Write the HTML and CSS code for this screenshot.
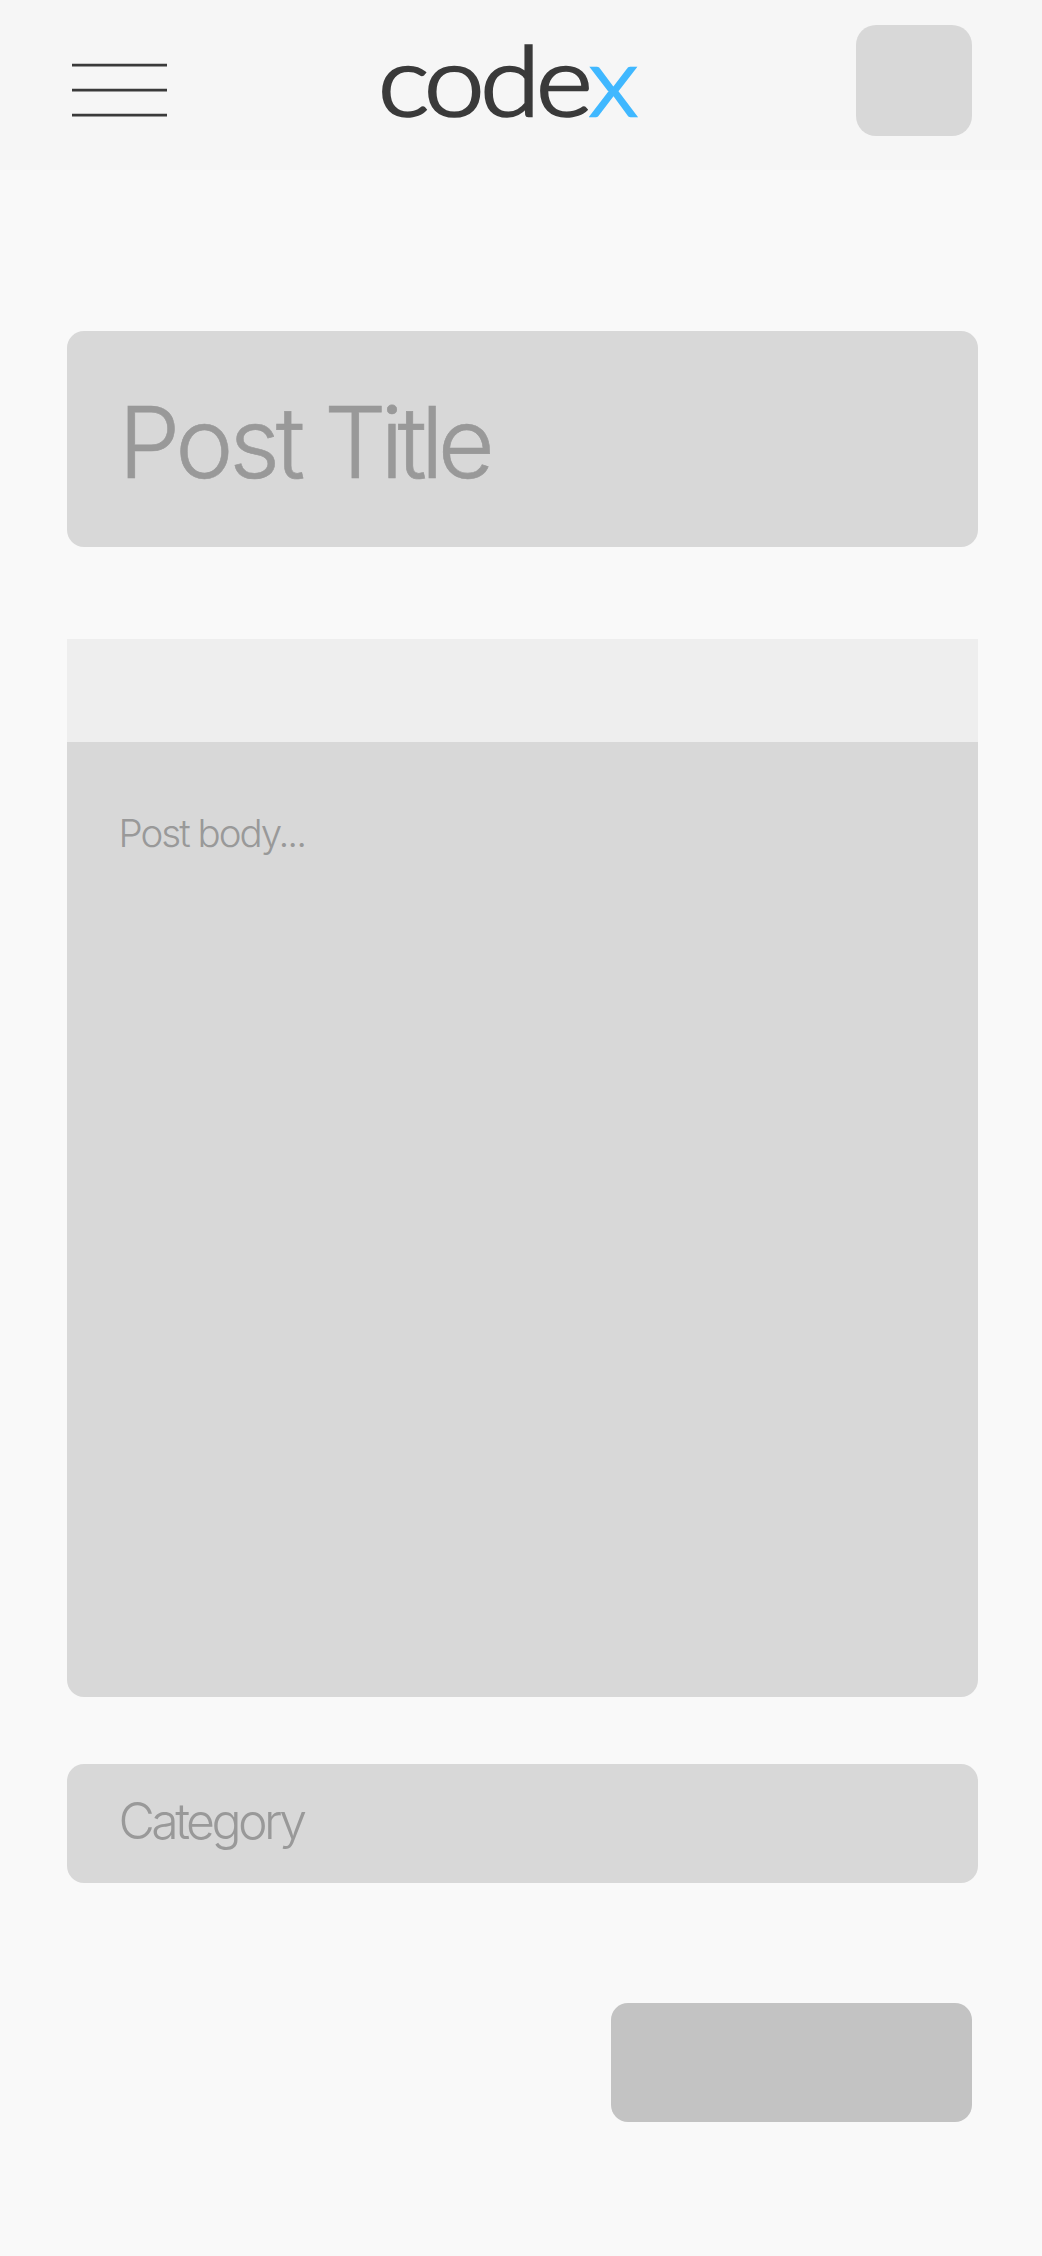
FILE: index.html
```html
<!DOCTYPE html>
<html lang="en">
<head>
<meta charset="utf-8">
<title>codex</title>
<link rel="stylesheet" href="styles.css">
</head>
<body>
<header class="header">
  <svg class="menu" width="95" height="56" viewBox="0 0 95 56" aria-hidden="true">
    <path d="M0 3.2H95M0 28.2H95M0 53.2H95" stroke="#3a3a3a" stroke-width="2.8"/>
  </svg>
  <div class="logo">code<span class="logo-accent">x</span></div>
  <div class="avatar"></div>
</header>
<main class="form">
  <div class="field title"><span class="first-word">Post </span>Title</div>
  <section class="editor">
    <div class="toolbar"></div>
    <div class="field body">Post body...</div>
  </section>
  <div class="field category">Category</div>
  <div class="submit"></div>
</main>
</body>
</html>
```
FILE: styles.css
```css
* { box-sizing: border-box; }
body {
  margin: 0;
  min-height: 2256px;
  background: #f9f9f9;
  font-family: Inter, "Liberation Sans", sans-serif;
  font-weight: 300;
}
.header {
  height: 169.5px;
  padding: 25px 70px 0 72px;
  display: flex;
  align-items: flex-start;
  background: #f6f6f6;
}
.menu { display: block; margin-top: 37px; }
.logo {
  margin: 4px 0 0 211px;
  font: 300 96px/100px Lato, sans-serif;
  letter-spacing: -3.7px;
  color: #3a3a3a;
  white-space: nowrap;
  -webkit-text-stroke: 2.7px currentColor;
  transform: scaleX(1.13);
  transform-origin: left;
}
.logo-accent {
  display: inline-block;
  color: #40b8ff;
  transform: scaleX(0.95);
}
.avatar {
  width: 116.5px;
  height: 111px;
  margin-left: auto;
  border-radius: 20px;
  background: #d8d8d8;
}
.form {
  padding: 161px 64px 0 67px;
  display: flex;
  flex-direction: column;
}
.field {
  background: #d8d8d8;
  border-radius: 17px;
  color: #999;
  white-space: nowrap;
}
.title {
  height: 216.5px;
  padding: 62px 0 0 51.5px;
  font-size: 98.4px;
  line-height: 100px;
  letter-spacing: -6px;
  -webkit-text-stroke: 0.6px currentColor;
}
.first-word { letter-spacing: -4.4px; }
.editor { margin-top: 92px; }
.toolbar { height: 103px; background: #eee; }
.body {
  height: 955px;
  padding: 66px 0 0 51.5px;
  border-radius: 0 0 17px 17px;
  font-size: 38.5px;
  line-height: 50px;
  letter-spacing: -2px;
}
.category {
  height: 119px;
  margin-top: 67px;
  padding: 27px 0 0 51.5px;
  font-size: 50px;
  line-height: 60px;
  letter-spacing: -3.6px;
}
.submit {
  width: 361px;
  height: 119.5px;
  margin: 119.5px 6px 0 auto;
  border-radius: 17px;
  background: #c3c3c3;
}
```
